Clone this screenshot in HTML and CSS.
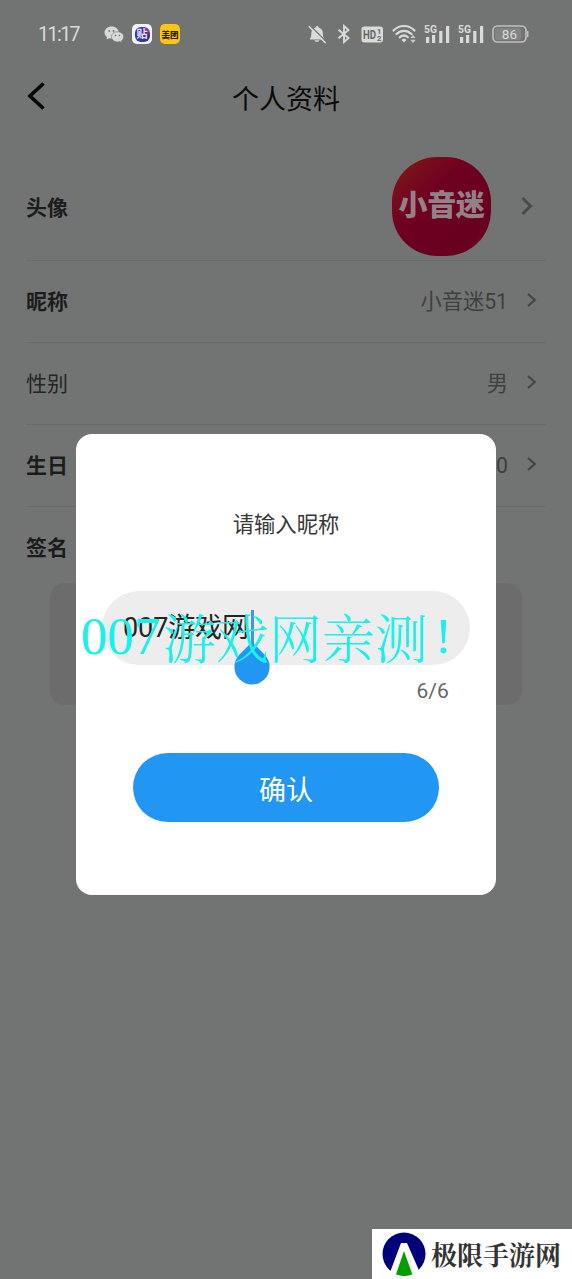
FILE: index.html
```html
<!DOCTYPE html>
<html lang="zh-CN">
<head>
<meta charset="utf-8">
<title>个人资料</title>
<link rel="stylesheet" href="styles.css">
</head>
<body>
<div class="screen">
  <div class="status">
    <span class="clock">11:17</span>
    <div class="apps">
      <svg width="20" height="20" viewBox="0 0 20 20"><path d="M7.600 2.500C3.600 2.500.5 5.200.5 8.500c0 1.900 1 3.500 2.500 4.600L2.500 15.500l2.600-1.300c.8.3 1.700.4 2.600.4 3.900 0 7-2.700 7-6.100S11.600 2.500 7.600 2.500z" fill="#d8d8d8"/><path d="M13.500 7.700c-3.400 0-6.100 2.300-6.100 5.100s2.700 5.100 6.100 5.100c.8 0 1.600-.1 2.300-.4l2.100 1.200-.5-2c1.400-.9 2.300-2.300 2.300-3.900 0-2.800-2.800-5.100-6.200-5.100z" fill="#d8d8d8" stroke="#727473" stroke-width=".6"/><g fill="#727473"><circle cx="5.300" cy="7" r=".9"/><circle cx="9.500" cy="7" r=".9"/><circle cx="11.500" cy="11.500" r=".8"/><circle cx="15.400" cy="11.500" r=".8"/></g></svg>
      <span class="app app-tie"><span class="tie-disc">贴</span></span>
      <span class="app app-mt">美团</span>
    </div>
    <div class="signals">
      <svg width="20" height="20" viewBox="0 0 20 20"><path d="M3 14.500c1-1.200 1.300-2.500 1.300-5C4.300 6 6.200 4 8.700 3.500c0-2 2.800-2 2.800 0C14 4 15.900 6 15.900 9.500c0 2.500.3 3.800 1.300 5v1H3z" fill="#dadada"/><path d="M7.400 16.200h5c-.6 2.200-4.400 2.200-5 0z" fill="#dadada"/><path d="M3 1.500 19.500 17.700" stroke="#727473" stroke-width="1.300"/><path d="M1.800 2.200 18.600 19" stroke="#dadada" stroke-width="1.600"/></svg>
      <svg width="14" height="20" viewBox="0 0 14 20"><path d="M1.500 5.700 11.500 14 7 18V2l4.500 4-10 8.300" fill="none" stroke="#dadada" stroke-width="1.900"/></svg>
      <svg class="hd" width="23" height="17" viewBox="0 0 23 17"><rect x=".5" y=".5" width="21.500" height="16" rx="3" fill="#dadada"/><g fill="#636564"><text x="2" y="12.800" class="hd-text" textLength="13" lengthAdjust="spacingAndGlyphs">HD</text><text x="15.900" y="8" class="hd-num">1</text><text x="16" y="14.700" class="hd-num">2</text></g></svg>
      <svg class="wifi" width="25" height="20" viewBox="0 0 25 20"><g fill="none" stroke="#dadada" stroke-width="2.200" stroke-linecap="round"><path d="M1.500 6.500c6-6 15-6 21 0M4.500 10c4.500-4.200 10.500-4.200 15 0M7.700 13.300c2.700-2.300 5.600-2.300 8.100 0"/></g><path d="m12 18.500-2.500-2.600c1.300-1.400 3.700-1.400 5 0z" fill="#dadada"/><path d="m18.200 14.100 2.800-3.100 2.800 3.100zM18.200 15.800h5.600L21 19z" fill="#c8c8c8"/></svg>
      <svg class="cell" width="27" height="20" viewBox="0 0 27 20"><text x="0" y="9" class="cell-text" textLength="13" lengthAdjust="spacingAndGlyphs">5G</text><g fill="#dadada"><rect x="2" y="13" width="3.200" height="6"/><rect x="8" y="11" width="3.200" height="8"/><rect x="15.200" y="7" width="3.200" height="12"/><rect x="22" y="2" width="3.200" height="17"/></g></svg>
      <svg class="cell" width="27" height="20" viewBox="0 0 27 20"><text x="0" y="9" class="cell-text" textLength="13" lengthAdjust="spacingAndGlyphs">5G</text><g fill="#dadada"><rect x="2" y="13" width="3.200" height="6"/><rect x="8" y="11" width="3.200" height="8"/><rect x="15.200" y="7" width="3.200" height="12"/><rect x="22" y="2" width="3.200" height="17"/></g></svg>
      <svg class="battery" width="37" height="18" viewBox="0 0 37 18"><rect x="1" y="1" width="33" height="16" rx="4.500" fill="none" stroke="#bfc0bf" stroke-width="1.600"/><rect x="3" y="3" width="26" height="12" rx="2.500" fill="#838584"/><path d="M35.700 6v6" stroke="#bfc0bf" stroke-width="1.500"/><text x="9.700" y="13.800" class="bat-text" textLength="15.500">86</text></svg>
    </div>
  </div>

  <header class="header">
    <svg class="back" width="20" height="30" viewBox="0 0 20 30"><path d="M17.500 2.500 4 15l13.500 12.500" fill="none" stroke="#050505" stroke-width="3.600"/></svg>
    <h1 class="title">个人资料</h1>
  </header>

  <main class="list">
    <div class="row row-avatar">
      <span class="label">头像</span>
      <span class="avatar"><span class="avatar-text">小音迷</span></span>
      <svg class="arrow-big" width="14" height="20" viewBox="0 0 14 20"><path d="m2.500 2 8 8-8 8" fill="none" stroke="#494b4a" stroke-width="3"/></svg>
    </div>
    <div class="row">
      <span class="label">昵称</span><span class="value">小音迷51</span>
      <svg class="arrow" width="11" height="16" viewBox="0 0 11 16"><path d="m2 2 6.800 6L2 14" fill="none" stroke="#454746" stroke-width="2.300"/></svg>
    </div>
    <div class="row">
      <span class="label label-plain">性别</span><span class="value">男</span>
      <svg class="arrow" width="11" height="16" viewBox="0 0 11 16"><path d="m2 2 6.800 6L2 14" fill="none" stroke="#454746" stroke-width="2.300"/></svg>
    </div>
    <div class="row">
      <span class="label">生日</span><span class="value">0</span>
      <svg class="arrow" width="11" height="16" viewBox="0 0 11 16"><path d="m2 2 6.800 6L2 14" fill="none" stroke="#454746" stroke-width="2.300"/></svg>
    </div>
    <div class="sign"><span class="label">签名</span></div>
    <div class="sign-box"></div>
  </main>

  <section class="dialog">
    <p class="dialog-title">请输入昵称</p>
    <div class="field"><span class="field-text">007游戏网</span><span class="caret"></span>
      <svg class="handle" width="38" height="44" viewBox="0 0 38 44"><path d="M19 1 31.500 13.500a17.600 17.600 0 1 1-25 0z" fill="#2196f3"/></svg>
    </div>
    <p class="count">6/6</p>
    <button class="confirm">确认</button>
  </section>

  <div class="watermark"><span class="wm-num">007</span><span class="wm-cjk">游戏网亲测</span><span class="wm-mark">!</span></div>

  <div class="brand">
    <svg width="44" height="46" viewBox="0 0 44 46"><circle cx="22" cy="23" r="21.500" fill="#00007d"/><path d="M19 12h6l14 32H7z" fill="#fff"/><path d="m22 20 8.300 23.300c-5 2.200-11 2.200-16.300 0z" fill="#00a000"/></svg>
    <span class="brand-name">极限手游网</span>
  </div>
</div>
</body>
</html>
```
FILE: styles.css
```css
* { box-sizing: border-box; }
body { margin: 0; font-family: Roboto, "Noto Sans CJK SC", sans-serif; }
p, h1 { margin: 0; font-weight: 400; }
svg { display: block; flex: none; }
.screen { position: relative; width: 572px; height: 1279px; background: #727473; overflow: hidden; }

.status { display: flex; align-items: center; height: 68px; padding: 0 43px 0 38px; }
.clock { width: 66px; font-size: 19.500px; line-height: 24px; color: #dadada; letter-spacing: -1.500px; padding-top: 1px; }
.apps { display: flex; align-items: center; gap: 8px; }
.app { width: 20px; height: 20px; border-radius: 5px; display: flex; align-items: center; justify-content: center; }
.app-tie { background: #f4f2fb; }
.tie-disc { width: 15px; height: 15px; border-radius: 6px; background: linear-gradient(45deg, #2742b8, #3c28a4 65%, #c050d8); color: #e9e2ff; font-size: 11px; line-height: 15px; text-align: center; font-weight: 700; }
.app-mt { background: #fcc60e; color: #2b2100; font-size: 8.500px; font-weight: 900; white-space: nowrap; }
.signals { display: flex; align-items: center; margin-left: auto; }
.signals svg + svg { margin-left: 10px; }
.signals svg.wifi { margin-left: 8px; }
.signals svg.cell { margin-left: 7px; }
.signals svg.battery { margin-left: 7px; }
.hd-text { font: 700 12px Roboto, sans-serif; }
.hd-num { font: 700 7.500px Roboto, sans-serif; }
.cell-text { font: 700 11px Roboto, sans-serif; fill: #dadada; }
.bat-text { font: 400 13.500px Roboto, sans-serif; fill: #dadada; }

.header { display: grid; grid-template-columns: 40px 1fr 40px; align-items: center; height: 60px; padding: 0 26px; }
.back { margin-top: -4px; }
.title { padding-top: 4px; font-size: 27px; line-height: 36px; color: #0b0b0b; text-align: center; }

.list { padding: 0 26px; }
.row { display: flex; align-items: center; height: 82px; border-bottom: 1px solid #696b6a; }
.row-avatar { height: 133px; padding-top: 24px; }
.row-avatar .label { padding-top: 3px; }
.label { font-size: 21px; line-height: 30px; font-weight: 700; color: #1b1c1c; }
.label-plain { font-weight: 400; color: #242525; }
.avatar { margin-left: auto; width: 99px; height: 99px; border-radius: 45px; display: flex; align-items: center; justify-content: center; background: linear-gradient(135deg, #802015 0%, #780d1c 20%, #6e0020 40%, #680020 84%, #770a12 88%, #65101a 100%); }
.avatar-text { font-size: 29px; line-height: 36px; font-weight: 900; color: #938188; letter-spacing: -.3px; }
.arrow-big { margin: 0 12px 0 29px; }
.value { margin-left: auto; font-size: 21.200px; line-height: 30px; color: #3e403f; }
.arrow { margin: -3px 9px 0 18px; }
.sign { height: 76px; padding-top: 26px; }
.sign-box { height: 122px; margin: 0 24px; border-radius: 15px; background: #6c6c6c; }

.dialog { position: absolute; left: 76px; top: 434px; width: 420px; height: 461px; border-radius: 16px; background: #fff; padding: 76px 26px 0; display: flex; flex-direction: column; align-items: center; }
.dialog-title { font-size: 21.300px; line-height: 30px; color: #373737; }
.field { position: relative; display: flex; align-items: center; width: 368px; height: 74px; margin-top: 51px; padding-left: 21px; border-radius: 37px; background: #ededed; }
.field-text { font-size: 27px; line-height: 36px; color: #252525; letter-spacing: -.1px; }
.caret { width: 3px; height: 36px; margin: 0 0 0 2px; background: #4b93e0; }
.handle { position: absolute; left: 131px; top: 50px; }
.count { align-self: flex-end; margin: 12px 21px 0 0; font-size: 21px; line-height: 28px; color: #666; letter-spacing: .1px; }
.confirm { width: 306px; height: 69px; margin-top: 48px; padding: 3px 0 0; border: 0; border-radius: 35px; background: #2196f3; color: #fff; font: 400 27px/36px "Noto Sans CJK SC", sans-serif; }

.watermark { position: absolute; left: 81px; top: 600px; height: 72px; display: flex; align-items: center; color: #19f1ed; line-height: 72px; white-space: nowrap; }
.wm-num { width: 82px; font: 400 53px/72px "Liberation Serif", serif; }
.wm-cjk { font: 300 53px/72px "Noto Serif CJK SC", "Noto Sans CJK SC", serif; }
.wm-mark { margin-left: 7px; font: 400 51px/72px "Liberation Serif", serif; }

.brand { position: absolute; right: 0; bottom: 0; width: 200px; height: 50px; padding-left: 10px; display: flex; align-items: center; gap: 5px; background: #fff; }
.brand-name { font: 700 26px/44px "Noto Serif CJK SC", "Noto Sans CJK SC", serif; color: #333; white-space: nowrap; }
```
